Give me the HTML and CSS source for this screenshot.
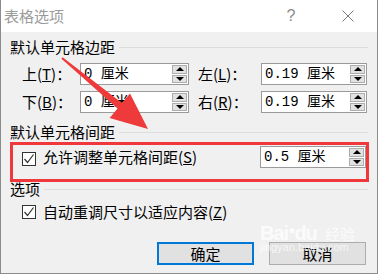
FILE: index.html
```html
<!DOCTYPE html>
<html lang="zh-CN">
<head>
  <meta charset="UTF-8" />
  <title>表格选项</title>
  <link rel="stylesheet" href="styles.css">
</head>
<body>
  <div class="dialog">
    <div class="titlebar">
      <span class="title">表格选项</span>
      <span class="help">?</span>
      <svg class="close" width="12" height="12" viewBox="0 0 12 12">
        <path d="M0.5 0.5 L11.5 11.5 M11.5 0.5 L0.5 11.5" stroke="#777" stroke-width="1" fill="none"/>
      </svg>
    </div>

    <div class="content">
      <div class="group">默认单元格边距</div>

      <div class="margins">
        <label>上(<u>T</u>)：</label>
        <div class="spin">
          <span class="val">0 厘米</span>
          <span class="arrows"><span class="up"></span><span class="down"></span></span>
        </div>
        <label class="right-label">左(<u>L</u>)：</label>
        <div class="spin">
          <span class="val">0.19 厘米</span>
          <span class="arrows"><span class="up"></span><span class="down"></span></span>
        </div>

        <label>下(<u>B</u>)：</label>
        <div class="spin">
          <span class="val">0 厘米</span>
          <span class="arrows"><span class="up"></span><span class="down"></span></span>
        </div>
        <label class="right-label">右(<u>R</u>)：</label>
        <div class="spin">
          <span class="val">0.19 厘米</span>
          <span class="arrows"><span class="up"></span><span class="down"></span></span>
        </div>
      </div>

      <div class="group group-2">默认单元格间距</div>

      <div class="check-row spacing-row">
        <span class="check"><svg width="12" height="12" viewBox="0 0 12 12"><path d="M1.5 6 L4.5 9.5 L10.5 1.5" stroke="#333" stroke-width="1.2" fill="none"/></svg></span>
        <span class="check-label">允许调整单元格间距(<u>S</u>)</span>
        <div class="spin spin-wide">
          <span class="val">0.5 厘米</span>
          <span class="arrows"><span class="up"></span><span class="down"></span></span>
        </div>
      </div>

      <div class="group group-3">选项</div>

      <div class="check-row auto-row">
        <span class="check"><svg width="12" height="12" viewBox="0 0 12 12"><path d="M1.5 6 L4.5 9.5 L10.5 1.5" stroke="#333" stroke-width="1.2" fill="none"/></svg></span>
        <span class="check-label">自动重调尺寸以适应内容(<u>Z</u>)</span>
      </div>

      <div class="buttons">
        <button type="button" class="btn btn-default">确定</button>
        <button type="button" class="btn">取消</button>
      </div>
    </div>

    <!-- annotations drawn over the screenshot -->
    <div class="highlight"></div>
    <svg class="arrow" width="378" height="275" viewBox="0 0 378 275">
      <polygon points="61.4,58.8 62.6,57.2 122,103.1 130,93.5 148,129 109.6,118.1 117.6,108.5" fill="#ee3a3a"/>
    </svg>

    <div class="watermark">
      <span class="wm-logo">Bai<span class="paw">&#9679;</span>du</span>
      <span class="wm-jy">经验</span>
      <span class="wm-url">jingyan.baidu.com</span>
    </div>
  </div>
</body>
</html>
```

FILE: styles.css
```css
body {
  margin: 0;
  padding: 0;
  background: #fff;
  font-family: "Noto Sans CJK SC", "Liberation Sans", sans-serif;
  font-size: 15px;
  color: #000;
}

.dialog {
  position: relative;
  width: 378px;
  height: 274px;
  box-sizing: border-box;
  border-left: 1px solid #8c8c8c;
  border-right: 1px solid #8c8c8c;
  border-bottom: 1px solid #8c8c8c;
  background: #f0f0f0;
  overflow: hidden;
}

.titlebar {
  height: 32px;
  background: #fff;
  display: flex;
  align-items: center;
  padding-left: 3px;
  padding-right: 23px;
}

.title {
  color: #9a9a9a;
  margin-right: auto;
  line-height: 20px;
}

.help {
  width: 20px;
  text-align: center;
  color: #8a8a8a;
  font-family: "Liberation Sans", sans-serif;
  font-size: 16px;
  margin-right: 41px;
}

.close {
  display: block;
}

.content {
  padding: 0 9px;
}

.group {
  display: flex;
  align-items: center;
  gap: 4px;
  height: 20px;
  line-height: 20px;
  margin-top: 5px;
}

.group::after {
  content: '';
  flex: 1;
  border-top: 1px solid #dcdcdc;
}

.group-2 {
  margin-top: 9px;
}

.group-3 {
  margin-top: 11px;
}

.margins {
  display: grid;
  grid-template-columns: 58px 109px 72px 106px;
  grid-auto-rows: 22px;
  row-gap: 6px;
  margin-top: 6px;
  margin-left: 12px;
  align-items: center;
}

label {
  line-height: 20px;
  white-space: nowrap;
}

.right-label {
  padding-left: 9px;
}

.spin {
  display: flex;
  height: 22px;
  box-sizing: border-box;
  border: 1px solid #9a9a9a;
  background: #fff;
}

.val {
  flex: 1;
  padding-left: 3px;
  font-family: "Liberation Mono", "Noto Sans CJK SC", monospace;
  font-size: 14px;
  line-height: 20px;
  white-space: nowrap;
}

.arrows {
  width: 15px;
  display: flex;
  flex-direction: column;
  gap: 1px;
  padding: 1px 1px 1px 0;
}

.up, .down {
  flex: 1;
  border: 1px solid #adadad;
  background: #e1e1e1;
  display: flex;
  align-items: center;
  justify-content: center;
}

.up::before {
  content: '';
  border-left: 4px solid transparent;
  border-right: 4px solid transparent;
  border-bottom: 4px solid #000;
}

.down::before {
  content: '';
  border-left: 4px solid transparent;
  border-right: 4px solid transparent;
  border-top: 4px solid #000;
}

.check-row {
  display: flex;
  align-items: center;
  margin-left: 12px;
}

.spacing-row {
  height: 22px;
  margin-top: 4px;
}

.auto-row {
  height: 20px;
  margin-top: 3px;
}

.check {
  width: 14px;
  height: 14px;
  box-sizing: border-box;
  border: 1px solid #333;
  background: #fff;
  display: flex;
  align-items: center;
  justify-content: center;
  margin-right: 7px;
}

.spacing-row .check {
  margin-top: 3px;
}

.check-label {
  line-height: 20px;
  white-space: nowrap;
}

.spin-wide {
  width: 106px;
  margin-left: auto;
  margin-right: 2px;
}

.buttons {
  display: flex;
  justify-content: flex-end;
  gap: 15px;
  margin-top: 20px;
  margin-right: 2px;
}

.btn {
  width: 97px;
  height: 23px;
  box-sizing: border-box;
  border: 1px solid #adadad;
  background: #e1e1e1;
  font-family: "Noto Sans CJK SC", sans-serif;
  font-size: 15px;
  line-height: 19px;
  padding: 0;
  color: #000;
}

.btn-default {
  border: 2px solid #0078d7;
}

.highlight {
  position: absolute;
  left: 9px;
  top: 142px;
  width: 359px;
  height: 40px;
  box-sizing: border-box;
  border: 3px solid #f0383c;
}

.arrow {
  position: absolute;
  left: -1px;
  top: 0;
}

.watermark {
  position: absolute;
  left: 259px;
  top: 222px;
  width: 100px;
  color: rgba(255, 255, 255, 0.75);
  font-family: "Liberation Sans", sans-serif;
  pointer-events: none;
}

.wm-logo {
  font-size: 20px;
  font-weight: bold;
  letter-spacing: -1px;
}

.paw {
  font-size: 12px;
  vertical-align: 6px;
}

.wm-jy {
  font-family: "Noto Sans CJK SC", sans-serif;
  font-size: 15px;
  margin-left: 4px;
}

.wm-url {
  display: block;
  font-size: 11px;
  margin-top: -4px;
}
```
